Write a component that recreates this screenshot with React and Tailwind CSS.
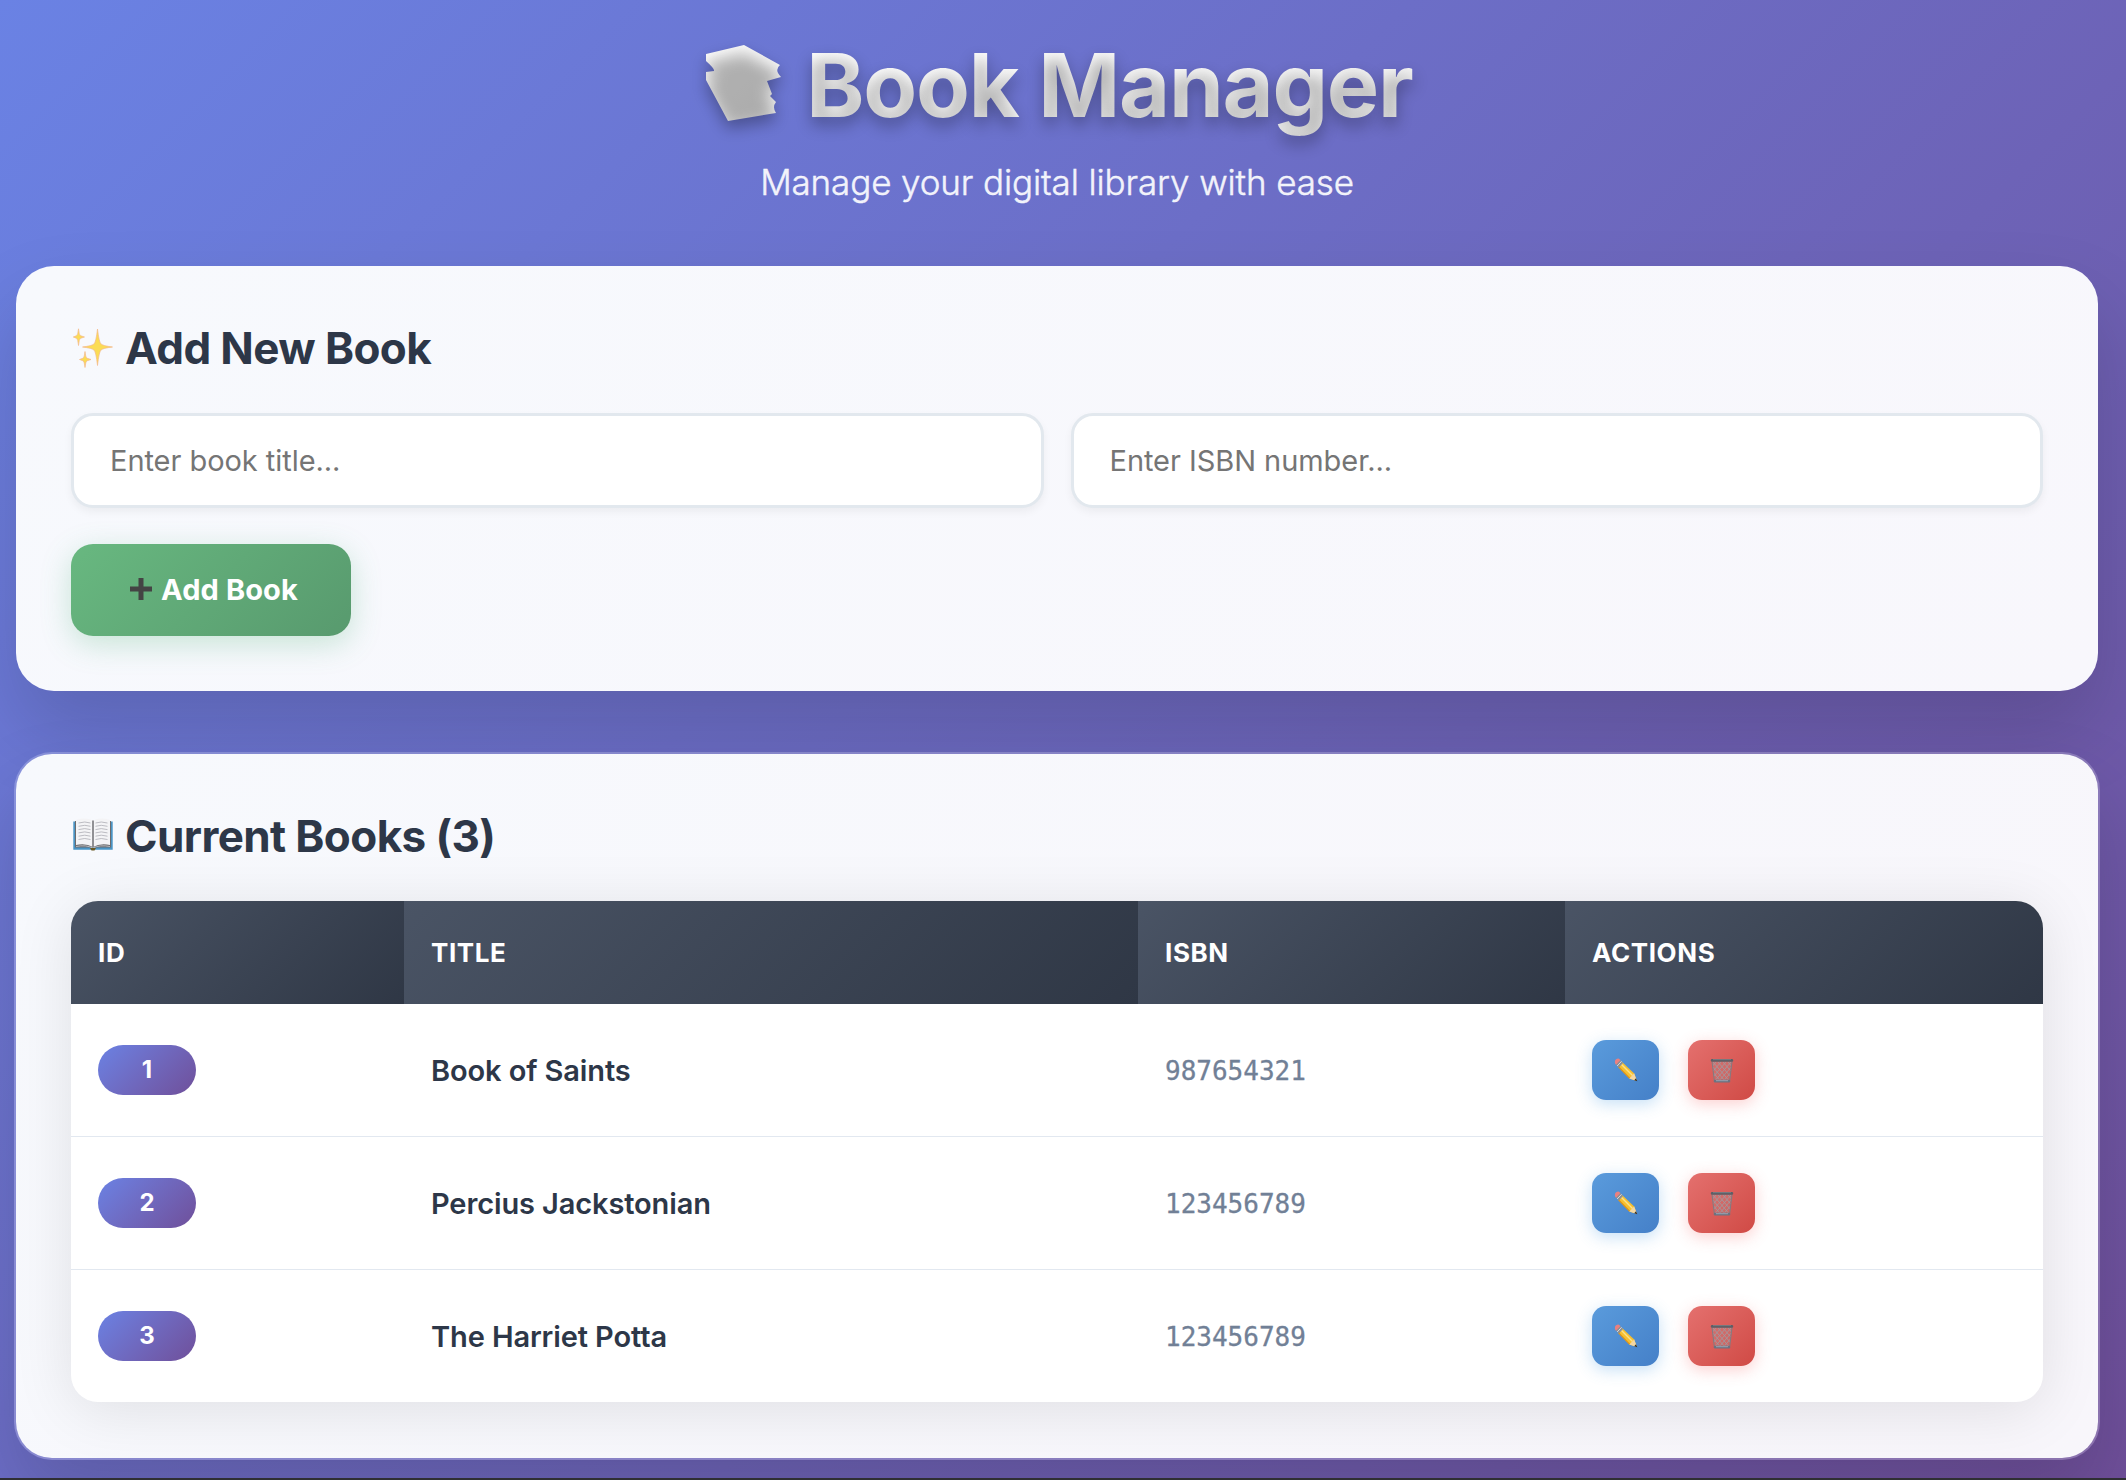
const BOOKS = [
  { id: 1, title: 'Book of Saints', isbn: '987654321' },
  { id: 2, title: 'Percius Jackstonian', isbn: '123456789' },
  { id: 3, title: 'The Harriet Potta', isbn: '123456789' },
];

const STACK = 'M1 9 L39 0 L75 20 Q69 25 76 32 L62 36 L67 49 L65 51 L71 57 Q67 62 71 68 L23 76 L1 35 L1 27 L9 26 Q10 24 1 16 Z';

function BooksIcon() {
  return (
    <svg className="w-[76px] h-[76px] mb-[4px] overflow-visible shrink-0" viewBox="0 0 76 76">
      <defs>
        <linearGradient id="stackFill" x1="0" y1="0" x2="1" y2="1">
          <stop offset="0" stopColor="#ffffff" />
          <stop offset="1" stopColor="#f5f5f5" />
        </linearGradient>
        <filter id="stackBlur" x="-50%" y="-50%" width="200%" height="200%">
          <feGaussianBlur stdDeviation="8" />
        </filter>
      </defs>
      <path d={STACK} fill="url(#stackFill)" />
      <path d={STACK} fill="#000" fillOpacity=".3" transform="translate(0 8)" filter="url(#stackBlur)" />
    </svg>
  );
}

function Sparkles() {
  return (
    <svg className="w-[40px] h-[40px] shrink-0" viewBox="0 0 40 40">
      <g fill="#fbdc55" stroke="#f3b98c" strokeWidth=".7">
        <path d="M24.500 1 Q26 14 28 16 Q30 17.800 39.500 19 Q30 20.200 28 22 Q26 24 24.500 37.500 Q23 24 21 22 Q19 20.200 9.500 19 Q19 17.800 21 16 Q23 14 24.500 1Z" />
        <path d="M5.500 .8 Q6.200 7 7.200 7.600 L11.500 9 L7.200 10.400 Q6.200 11 5.500 17.500 Q4.800 11 3.800 10.400 L.3 9 L3.800 7.600 Q4.800 7 5.500 .8Z" />
        <path d="M12 23.500 Q12.700 29.500 13.700 30.100 L18 31.500 L13.700 32.900 Q12.700 33.500 12 39.500 Q11.300 33.500 10.300 32.900 L6.500 31.500 L10.300 30.100 Q11.300 29.500 12 23.500Z" />
      </g>
    </svg>
  );
}

function OpenBook() {
  return (
    <svg className="w-[40px] h-[33px] mb-[3px] shrink-0" viewBox="0 0 40 33">
      <path d="M.3 3.500H39.700V31.800H.3Z" fill="#4a94c4" />
      <path d="M2 3H38V29.500H2Z" fill="#6b6b6e" />
      <path d="M3 2 Q13 -1 20 2.500 Q27 -1 37 2 V27 Q27 25 20 29 Q13 25 3 27Z" fill="#f4f4f6" />
      <path d="M3 28.500 Q13 26.500 19.800 30 Q27 26.500 37 28.500" stroke="#b9b9bd" strokeWidth="1" fill="none" />
      <path d="M20 2.500V29" stroke="#77777b" strokeWidth="1.600" />
      <g stroke="#b5b5bc" strokeWidth=".9" fill="none">
        <path d="M5.500 5 Q12 3 17.500 5M5.500 8.300 Q12 6.300 17.500 8.300M5.500 11.600 Q12 9.600 17.500 11.600M5.500 14.900 Q12 12.900 17.500 14.900M5.500 18.200 Q12 16.200 17.500 18.200M5.500 21.500 Q12 19.500 17.500 21.500" />
        <path d="M22.500 5 Q28 3 34.500 5M22.500 8.300 Q28 6.300 34.500 8.300M22.500 11.600 Q28 9.600 34.500 11.600M22.500 14.900 Q28 12.900 34.500 14.900M22.500 18.200 Q28 16.200 34.500 18.200M22.500 21.500 Q28 19.500 34.500 21.500" />
      </g>
      <path d="M17 30 H23 L21.500 32.500 H18.500Z" fill="#6a5a24" />
    </svg>
  );
}

function Pencil() {
  return (
    <svg className="w-[24px] h-[24px]" viewBox="0 0 24 24">
      <path d="M7.800 3.800 L20.200 15.600 L23 23 L15.300 20.400 L3.800 8.600Z" fill="#f7c02f" />
      <path d="M7 6 L18.500 17.500" stroke="#fbe08a" strokeWidth="1.400" />
      <path d="M4.600 8.800 L15.800 20.300" stroke="#d8901d" strokeWidth="1.200" />
      <path d="M20.200 15.600 L23 23 L15.300 20.400Z" fill="#f3d7a4" />
      <path d="M22 20.300 L23.300 23.300 L20.200 22.200Z" fill="#2b2b2b" />
      <path d="M5.800 1.800 L9 5 L4.900 9.600 L1.400 6Z" fill="#8b8f96" />
      <path d="M7.600 3.300 L3.100 8" stroke="#d5d8dc" strokeWidth="1" />
      <path d="M1 3 Q1.500 .5 4.500 .5 L6.500 2 L2 6.800 Q.3 5.500 1 3Z" fill="#ea8080" />
    </svg>
  );
}

function Trash() {
  return (
    <svg className="w-[24px] h-[25px]" viewBox="0 0 24 25">
      <path d="M2 3 L4.500 23 H19.500 L22 3Z" fill="#a9a0a4" fillOpacity=".2" />
      <g stroke="#a3999d" strokeWidth=".9" fill="none">
        <path d="M2.800 9 L14.500 22.500M3 4 L18.500 22M8 4 L20 18M13 4 L20.800 13M18 4 L21.500 8M3.600 15 L10 22.500" />
        <path d="M21.200 9 L9.500 22.500M21 4 L5.500 22M16 4 L4 18M11 4 L3.200 13M6 4 L2.500 8M20.400 15 L14 22.500" />
      </g>
      <path d="M2 3.500 L4.400 23M22 3.500 L19.600 23" stroke="#857b80" strokeWidth="1.100" />
      <rect x=".8" y="1" width="22.400" height="2.800" rx="1.300" fill="#5c5f66" />
      <path d="M3 1.600H21" stroke="#85888e" strokeWidth=".7" />
      <rect x="3.800" y="21.800" width="16.400" height="2.600" rx="1.200" fill="#6c7280" />
      <path d="M6 22.700H18" stroke="#a9b0bd" strokeWidth=".8" />
    </svg>
  );
}

function Plus() {
  return (
    <svg className="w-[22px] h-[22px] mb-[3px] shrink-0" viewBox="0 0 22 22">
      <path d="M8.500 0H13.500V8.500H22V13.500H13.500V22H8.500V13.500H0V8.500H8.500Z" fill="#444" />
    </svg>
  );
}

const TH = 'h-[103px] pl-[27px] text-left align-middle text-[26px] font-bold tracking-[0.6px] text-white bg-linear-135 from-[#4a5465] to-[#2f3745]';
const INPUT = 'h-[95px] rounded-[22px] border-[3px] border-[#e2e8ee] bg-white pl-[36px] text-[29px] tracking-[-0.05px] placeholder:text-[#757575] shadow-[0_4px_8px_rgba(0,0,0,0.05)]';
const H2 = 'h-[60px] flex items-center gap-[12px] pl-[2px] text-[44px] font-bold tracking-[-0.6px] text-[#2d3748]';

export default function App() {
  return (
    <div className="w-[2126px] h-[1480px] overflow-hidden flex flex-col bg-[#2f2f33] font-['Inter',sans-serif]">
      <div className="h-[1478px] shrink-0 overflow-hidden bg-[linear-gradient(135deg,#6a82e4_0%,#6f4f9a_100%)] pl-[14px] pr-[26px] flex flex-col">
        <header className="h-[266px] shrink-0 flex flex-col items-center pt-[32px]">
          <div className="ml-[4px] h-[106px] flex items-center gap-[25px]">
            <BooksIcon />
            <h1 className="text-[88px] leading-[106px] font-bold tracking-[-1.2px] whitespace-nowrap text-transparent bg-clip-text bg-[linear-gradient(135deg,#ffffff,#f5f5f5)] [text-shadow:0_8px_16px_rgba(0,0,0,0.3)]">Book Manager</h1>
          </div>
          <p className="mt-[22px] text-[35px] leading-[44px] font-light tracking-[-0.12px] text-white/90 [-webkit-text-stroke:0.4px]">Manage your digital library with ease</p>
        </header>

        <section className="mx-[2px] h-[425px] shrink-0 rounded-[38px] bg-[linear-gradient(135deg,#f7f9fd,#f8f7fc)] px-[55px] pt-[52px] shadow-[0_40px_80px_rgba(0,0,0,0.15)]">
          <h2 className={H2}>
            <Sparkles />
            <span>Add New Book</span>
          </h2>
          <div className="mt-[35px] grid grid-cols-2 gap-[27px]">
            <input className={INPUT} placeholder="Enter book title..." />
            <input className={INPUT} placeholder="Enter ISBN number..." />
          </div>
          <button className="mt-[36px] w-[280px] h-[92px] rounded-[22px] flex items-center justify-center gap-[9px] pl-[6px] bg-linear-135 from-[#68b880] to-[#589a6e] text-[29px] font-bold tracking-[0.1px] text-white shadow-[0_8px_30px_rgba(72,175,110,0.27)]">
            <Plus />
            <span>Add Book</span>
          </button>
        </section>

        <section className="mt-[61px] h-[708px] shrink-0 rounded-[38px] border-2 border-white/20 bg-[linear-gradient(135deg,#f7f9fd,#f8f6fb)] bg-clip-padding px-[55px] pt-[52px] shadow-[0_40px_80px_rgba(0,0,0,0.15)]">
          <h2 className={H2}>
            <OpenBook />
            <span>Current Books (3)</span>
          </h2>
          <div className="mt-[35px] rounded-[27px] overflow-hidden bg-white shadow-[0_8px_60px_rgba(0,0,0,0.1)]">
            <table className="w-full table-fixed border-separate border-spacing-0">
              <colgroup>
                <col className="w-[333px]" />
                <col className="w-[734px]" />
                <col className="w-[427px]" />
                <col />
              </colgroup>
              <thead>
                <tr>
                  <th className={TH}>ID</th>
                  <th className={TH}>TITLE</th>
                  <th className={TH}>ISBN</th>
                  <th className={TH}>ACTIONS</th>
                </tr>
              </thead>
              <tbody>
                {BOOKS.map((b) => (
                  <tr key={b.id} className="[&>td]:h-[133px] [&>td]:pl-[27px] [&>td]:border-b [&>td]:border-[#e2e8f0] last:[&>td]:border-b-0 last:[&>td]:h-[132px]">
                    <td>
                      <span className="w-[98px] h-[50px] rounded-full flex items-center justify-center bg-linear-135 from-[#6a82e4] to-[#6f4f9a] text-[24px] font-bold text-white">{b.id}</span>
                    </td>
                    <td className="text-[29px] font-semibold tracking-[-0.12px] text-[#2d3748]"><div className="pt-[1px]">{b.title}</div></td>
                    <td className="font-['DejaVu_Sans_Mono',monospace] text-[26px] text-[#718096] [-webkit-text-stroke:0.3px]"><div className="pt-[2px]">{b.isbn}</div></td>
                    <td>
                      <div className="flex gap-[29px]">
                        <button className="w-[67px] h-[60px] rounded-[14px] flex items-center justify-center bg-linear-135 from-[#5a9bdc] to-[#4580c8] shadow-[0_4px_16px_rgba(66,153,225,0.3)]"><Pencil /></button>
                        <button className="w-[67px] h-[60px] rounded-[14px] flex items-center justify-center bg-linear-135 from-[#e4706e] to-[#d04a45] shadow-[0_4px_16px_rgba(245,101,101,0.3)]"><Trash /></button>
                      </div>
                    </td>
                  </tr>
                ))}
              </tbody>
            </table>
          </div>
        </section>
      </div>
    </div>
  );
}
